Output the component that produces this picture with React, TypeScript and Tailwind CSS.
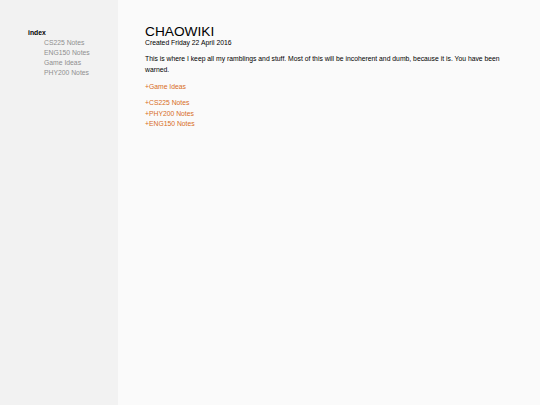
export default function App() {
  return (
    <div className="flex min-h-[405px] w-[540px] bg-[#fafafa] text-black" style={{ fontFamily: '"Liberation Sans", Arial, sans-serif' }}>
      <aside className="w-[118px] shrink-0 bg-[#f2f2f2] pl-[28px] pt-[28px]">
        <div className="text-[6.8px] font-bold leading-[10px]">index</div>
        <ul className="pl-[16px] text-[6.8px] leading-[10px] text-[#8f8f8f]">
          <li>CS225 Notes</li>
          <li>ENG150 Notes</li>
          <li>Game Ideas</li>
          <li>PHY200 Notes</li>
        </ul>
      </aside>
      <main className="flex-1 pl-[27px] pr-[30px] pt-[25px]">
        <h1 className="text-[13.7px] leading-[13px]">CHAOWIKI</h1>
        <div className="text-[6.8px] leading-[9px]">Created Friday 22 April 2016</div>
        <p className="mt-[6px] text-[6.8px] leading-[11px]">
          This is where I keep all my ramblings and stuff. Most of this will be incoherent and dumb, because it is. You have been warned.
        </p>
        <p className="mt-[6px] text-[6.8px] leading-[11px] text-[#d86c1e]">+Game Ideas</p>
        <div className="mt-[6px] text-[6.8px] leading-[10.5px] text-[#d86c1e]">
          <div>+CS225 Notes</div>
          <div>+PHY200 Notes</div>
          <div>+ENG150 Notes</div>
        </div>
      </main>
    </div>
  );
}
